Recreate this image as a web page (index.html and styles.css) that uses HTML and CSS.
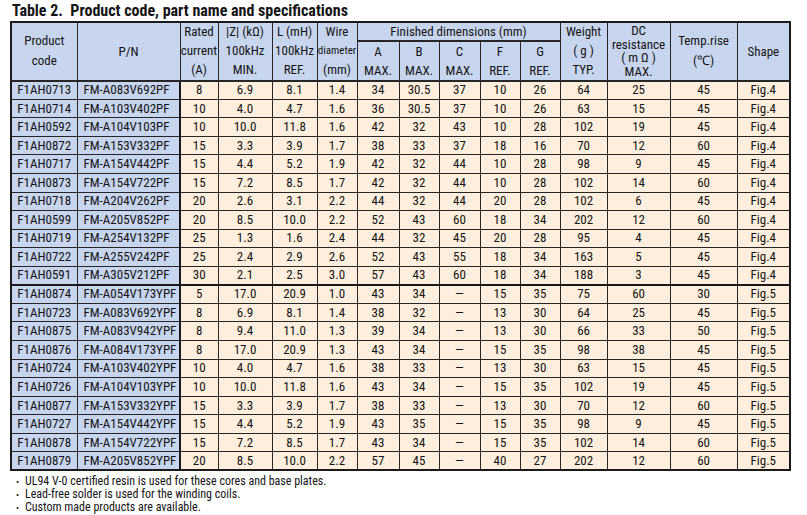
FILE: index.html
```html
<!DOCTYPE html>
<html>
<head>
<meta charset="utf-8">
<link rel="stylesheet" href="styles.css">
</head>
<body>
<div class="title">Table 2.&nbsp; Product code, part name and specifications</div>
<table class="spec">
<colgroup>
<col class="c66"><col class="c103"><col class="c38"><col class="c54"><col class="c45"><col class="c40"><col class="c42"><col class="c40"><col class="c41"><col class="c40"><col class="c40"><col class="c47"><col class="c63"><col class="c67"><col class="c53">
</colgroup>
<thead>
<tr class="h1">
<th rowspan="3" class="two"><div>Product</div><div>code</div></th>
<th rowspan="3">P/N</th>
<th rowspan="3" class="three"><div>Rated</div><div>current</div><div>(A)</div></th>
<th rowspan="3" class="three"><div>|Z| (kΩ)</div><div>100kHz</div><div>MIN.</div></th>
<th rowspan="3" class="three"><div>L (mH)</div><div>100kHz</div><div>REF.</div></th>
<th rowspan="3" class="three"><div>Wire</div><div class="small">diameter</div><div>(mm)</div></th>
<th colspan="5">Finished dimensions (mm)</th>
<th rowspan="3" class="three"><div>Weight</div><div>( g )</div><div>TYP.</div></th>
<th rowspan="3" class="four"><div>DC</div><div>resistance</div><div>( m Ω )</div><div>MAX.</div></th>
<th rowspan="3" class="two"><div>Temp.rise</div><div>(℃)</div></th>
<th rowspan="3">Shape</th>
</tr>
<tr class="h2">
<th rowspan="2" class="dim"><div>A</div><div>MAX.</div></th>
<th rowspan="2" class="dim"><div>B</div><div>MAX.</div></th>
<th rowspan="2" class="dim"><div>C</div><div>MAX.</div></th>
<th rowspan="2" class="dim"><div>F</div><div>REF.</div></th>
<th rowspan="2" class="dim"><div>G</div><div>REF.</div></th>
</tr>
<tr class="h3"></tr>
</thead>
<tbody>
<tr><td class="code">F1AH0713</td><td class="pn">FM-A083V692PF</td><td>8</td><td>6.9</td><td>8.1</td><td>1.4</td><td>34</td><td>30.5</td><td>37</td><td>10</td><td>26</td><td>64</td><td>25</td><td>45</td><td>Fig.4</td></tr>
<tr><td class="code">F1AH0714</td><td class="pn">FM-A103V402PF</td><td>10</td><td>4.0</td><td>4.7</td><td>1.6</td><td>36</td><td>30.5</td><td>37</td><td>10</td><td>26</td><td>63</td><td>15</td><td>45</td><td>Fig.4</td></tr>
<tr><td class="code">F1AH0592</td><td class="pn">FM-A104V103PF</td><td>10</td><td>10.0</td><td>11.8</td><td>1.6</td><td>42</td><td>32</td><td>43</td><td>10</td><td>28</td><td>102</td><td>19</td><td>45</td><td>Fig.4</td></tr>
<tr><td class="code">F1AH0872</td><td class="pn">FM-A153V332PF</td><td>15</td><td>3.3</td><td>3.9</td><td>1.7</td><td>38</td><td>33</td><td>37</td><td>18</td><td>16</td><td>70</td><td>12</td><td>60</td><td>Fig.4</td></tr>
<tr><td class="code">F1AH0717</td><td class="pn">FM-A154V442PF</td><td>15</td><td>4.4</td><td>5.2</td><td>1.9</td><td>42</td><td>32</td><td>44</td><td>10</td><td>28</td><td>98</td><td>9</td><td>45</td><td>Fig.4</td></tr>
<tr><td class="code">F1AH0873</td><td class="pn">FM-A154V722PF</td><td>15</td><td>7.2</td><td>8.5</td><td>1.7</td><td>42</td><td>32</td><td>44</td><td>10</td><td>28</td><td>102</td><td>14</td><td>60</td><td>Fig.4</td></tr>
<tr><td class="code">F1AH0718</td><td class="pn">FM-A204V262PF</td><td>20</td><td>2.6</td><td>3.1</td><td>2.2</td><td>44</td><td>32</td><td>44</td><td>20</td><td>28</td><td>102</td><td>6</td><td>45</td><td>Fig.4</td></tr>
<tr><td class="code">F1AH0599</td><td class="pn">FM-A205V852PF</td><td>20</td><td>8.5</td><td>10.0</td><td>2.2</td><td>52</td><td>43</td><td>60</td><td>18</td><td>34</td><td>202</td><td>12</td><td>60</td><td>Fig.4</td></tr>
<tr><td class="code">F1AH0719</td><td class="pn">FM-A254V132PF</td><td>25</td><td>1.3</td><td>1.6</td><td>2.4</td><td>44</td><td>32</td><td>45</td><td>20</td><td>28</td><td>95</td><td>4</td><td>45</td><td>Fig.4</td></tr>
<tr><td class="code">F1AH0722</td><td class="pn">FM-A255V242PF</td><td>25</td><td>2.4</td><td>2.9</td><td>2.6</td><td>52</td><td>43</td><td>55</td><td>18</td><td>34</td><td>163</td><td>5</td><td>45</td><td>Fig.4</td></tr>
<tr class="last4"><td class="code">F1AH0591</td><td class="pn">FM-A305V212PF</td><td>30</td><td>2.1</td><td>2.5</td><td>3.0</td><td>57</td><td>43</td><td>60</td><td>18</td><td>34</td><td>188</td><td>3</td><td>45</td><td>Fig.4</td></tr>
<tr><td class="code">F1AH0874</td><td class="pn">FM-A054V173YPF</td><td>5</td><td>17.0</td><td>20.9</td><td>1.0</td><td>43</td><td>34</td><td>—</td><td>15</td><td>35</td><td>75</td><td>60</td><td>30</td><td>Fig.5</td></tr>
<tr><td class="code">F1AH0723</td><td class="pn">FM-A083V692YPF</td><td>8</td><td>6.9</td><td>8.1</td><td>1.4</td><td>38</td><td>32</td><td>—</td><td>13</td><td>30</td><td>64</td><td>25</td><td>45</td><td>Fig.5</td></tr>
<tr><td class="code">F1AH0875</td><td class="pn">FM-A083V942YPF</td><td>8</td><td>9.4</td><td>11.0</td><td>1.3</td><td>39</td><td>34</td><td>—</td><td>13</td><td>30</td><td>66</td><td>33</td><td>50</td><td>Fig.5</td></tr>
<tr><td class="code">F1AH0876</td><td class="pn">FM-A084V173YPF</td><td>8</td><td>17.0</td><td>20.9</td><td>1.3</td><td>43</td><td>34</td><td>—</td><td>15</td><td>35</td><td>98</td><td>38</td><td>45</td><td>Fig.5</td></tr>
<tr><td class="code">F1AH0724</td><td class="pn">FM-A103V402YPF</td><td>10</td><td>4.0</td><td>4.7</td><td>1.6</td><td>38</td><td>33</td><td>—</td><td>13</td><td>30</td><td>63</td><td>15</td><td>45</td><td>Fig.5</td></tr>
<tr><td class="code">F1AH0726</td><td class="pn">FM-A104V103YPF</td><td>10</td><td>10.0</td><td>11.8</td><td>1.6</td><td>43</td><td>34</td><td>—</td><td>15</td><td>35</td><td>102</td><td>19</td><td>45</td><td>Fig.5</td></tr>
<tr><td class="code">F1AH0877</td><td class="pn">FM-A153V332YPF</td><td>15</td><td>3.3</td><td>3.9</td><td>1.7</td><td>38</td><td>33</td><td>—</td><td>13</td><td>30</td><td>70</td><td>12</td><td>60</td><td>Fig.5</td></tr>
<tr><td class="code">F1AH0727</td><td class="pn">FM-A154V442YPF</td><td>15</td><td>4.4</td><td>5.2</td><td>1.9</td><td>43</td><td>35</td><td>—</td><td>15</td><td>35</td><td>98</td><td>9</td><td>45</td><td>Fig.5</td></tr>
<tr><td class="code">F1AH0878</td><td class="pn">FM-A154V722YPF</td><td>15</td><td>7.2</td><td>8.5</td><td>1.7</td><td>43</td><td>34</td><td>—</td><td>15</td><td>35</td><td>102</td><td>14</td><td>60</td><td>Fig.5</td></tr>
<tr><td class="code">F1AH0879</td><td class="pn">FM-A205V852YPF</td><td>20</td><td>8.5</td><td>10.0</td><td>2.2</td><td>57</td><td>45</td><td>—</td><td>40</td><td>27</td><td>202</td><td>12</td><td>60</td><td>Fig.5</td></tr>
</tbody>
</table>
<ul class="notes">
<li><span class="dot">・</span>UL94 V-0 certified resin is used for these cores and base plates.</li>
<li><span class="dot">・</span>Lead-free solder is used for the winding coils.</li>
<li><span class="dot">・</span>Custom made products are available.</li>
</ul>
</body>
</html>
```
FILE: styles.css
```css
html, body {
  margin: 0;
  padding: 0;
  background: #ffffff;
}
body {
  padding-left: 10px;
  font-family: Roboto, "Liberation Sans", Arial, sans-serif;
  font-stretch: 75%;
  color: #141414;
}
.title {
  font-weight: bold;
  font-size: 16px;
  font-stretch: 87.5%;
  height: 21px;
  line-height: 21px;
  padding-left: 2px;
}
.c66 { width: 66px; }
.c103 { width: 103px; }
.c38 { width: 38px; }
.c54 { width: 54px; }
.c45 { width: 45px; }
.c40 { width: 40px; }
.c42 { width: 42px; }
.c41 { width: 41px; }
.c47 { width: 47px; }
.c63 { width: 63px; }
.c67 { width: 67px; }
.c53 { width: 53px; }
.spec {
  border-collapse: collapse;
  table-layout: fixed;
  width: 780px;
  border: 2px solid #1a1a1a;
  font-size: 13px;
}
.spec th, .spec td {
  border: 1px solid #262626;
  padding: 0;
  text-align: center;
  white-space: nowrap;
  overflow: hidden;
}
.spec th {
  background: #c7d5ee;
  font-weight: normal;
  vertical-align: middle;
}
.spec thead tr { height: 18.67px; }
.spec tbody tr { height: 18.57px; }
.spec thead th { border-bottom-width: 2px; }
.spec th.three div { line-height: 18.6px; }
.spec th.two div { line-height: 20px; }
.spec th.four div { line-height: 13.5px; }
.spec th.dim div { line-height: 19px; }
.spec th .small {
  font-size: 11px;
  font-stretch: 87.5%;
}
.spec td {
  background: #fdeedd;
  line-height: 16px;
}
.spec td.code {
  background: #c7d5ee;
}
.spec td.pn {
  background: #c7d5ee;
  text-align: left;
  padding-left: 6px;
  border-right: 2px solid #1a1a1a;
}
.spec tr.last4 td {
  border-bottom: 2px solid #1a1a1a;
}
.notes {
  list-style: none;
  margin: 4px 0 0 0;
  padding: 0 0 0 3px;
  font-size: 12px;
  font-stretch: 87.5%;
  line-height: 13px;
}
.notes .dot {
  display: inline-block;
  width: 12px;
  font-family: "Noto Sans CJK JP", sans-serif;
  font-size: 9px;
}
```
